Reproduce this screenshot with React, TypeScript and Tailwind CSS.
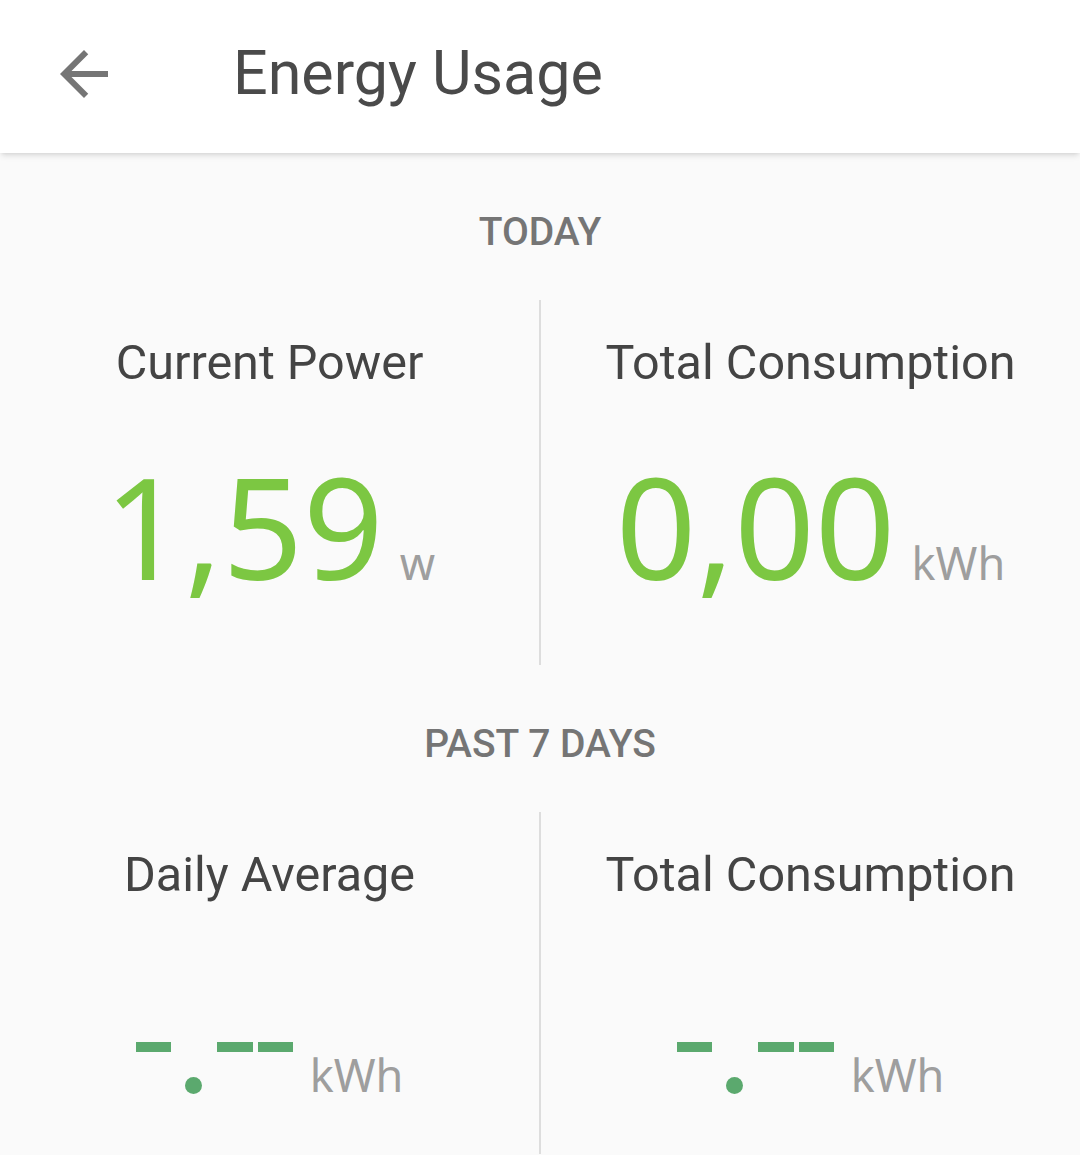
const DashValue = () => (
  <svg width="158" height="52" viewBox="0 0 158 52" className="relative top-[2px] shrink-0">
    <rect x="0" y="0" width="35" height="10" fill="#5ba96e" />
    <circle cx="57.5" cy="43.5" r="8.5" fill="#5ba96e" />
    <rect x="81" y="0" width="36" height="10" fill="#5ba96e" />
    <rect x="122" y="0" width="35" height="10" fill="#5ba96e" />
  </svg>
);

const Stat = ({ title, value, unit, empty }: { title: string; value?: string; unit: string; empty?: boolean }) => (
  <div className="flex flex-col items-center pt-[34px]">
    <div className="font-['Roboto'] text-[48.5px] leading-[58px] text-[#444444]">{title}</div>
    <div className="mt-[63px] flex items-baseline gap-[16px]">
      {empty ? (
        <>
          {/* strut so the dashes sit on the same baseline as the numbers above */}
          <span className="-mr-[16px] h-[125px] w-0" />
          <DashValue />
        </>
      ) : (
        <span className="font-['Noto_Sans'] text-[141px] leading-none text-[#7cc742]">{value}</span>
      )}
      <span className="font-['Noto_Sans'] text-[45px] leading-none text-[#9e9e9e]">{unit}</span>
    </div>
  </div>
);

const SectionLabel = ({ label }: { label: string }) => (
  <div className="pt-[56px] pb-[45px] text-center font-['Roboto'] text-[39px] font-medium leading-[46px] text-[#757575]">
    {label}
  </div>
);

export default function App() {
  return (
    <div className="min-h-[1155px] w-[1080px] overflow-hidden bg-[#fafafa]">
      <header className="relative z-10 flex h-[153px] items-center bg-white shadow-md">
        <svg width="72" height="72" viewBox="0 0 24 24" fill="#757575" className="ml-[48px] -mt-[6px] shrink-0">
          <path d="M20 11H7.83l5.59-5.59L12 4l-8 8 8 8 1.41-1.41L7.83 13H20v-2z" />
        </svg>
        <h1 className="ml-[113px] -mt-[6px] font-['Roboto'] text-[61px] leading-none text-[#4a4a4a]">Energy Usage</h1>
      </header>

      <SectionLabel label="TODAY" />
      <div className="grid h-[365px] grid-cols-[1fr_2px_1fr]">
        <Stat title="Current Power" value="1,59" unit="w" />
        <div className="bg-[#dddddd]" />
        <Stat title="Total Consumption" value="0,00" unit="kWh" />
      </div>

      <SectionLabel label="PAST 7 DAYS" />
      <div className="grid h-[342px] grid-cols-[1fr_2px_1fr]">
        <Stat title="Daily Average" unit="kWh" empty />
        <div className="bg-[#dddddd]" />
        <Stat title="Total Consumption" unit="kWh" empty />
      </div>
    </div>
  );
}
